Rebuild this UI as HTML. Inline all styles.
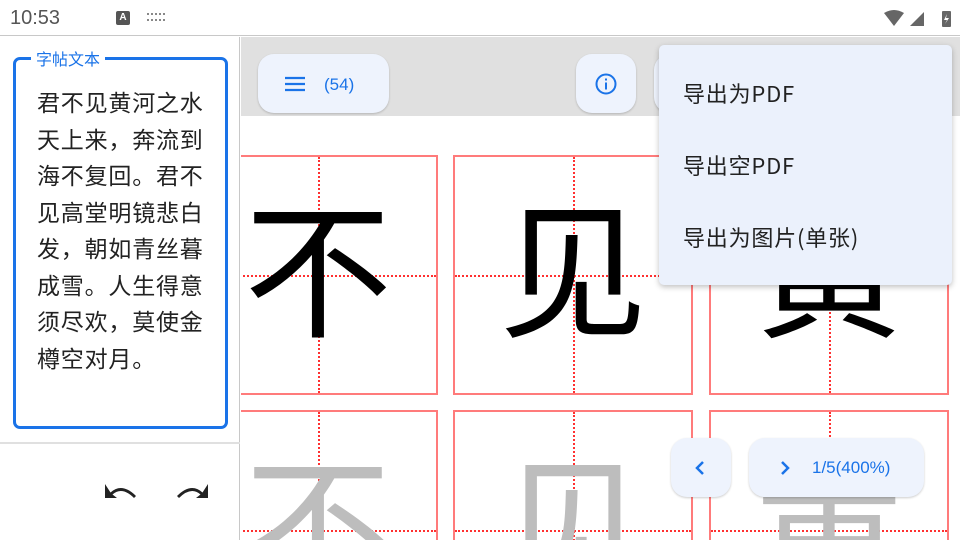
<!DOCTYPE html>
<html><head><meta charset="utf-8"><style>
*{margin:0;padding:0;box-sizing:border-box}
body{width:960px;height:540px;overflow:hidden;position:relative;background:#fff;font-family:"Liberation Sans","Noto Sans CJK SC",sans-serif}
.abs{position:absolute}
.cell{position:absolute;width:240px;height:240px;border:2px solid #ff7b7b}
.cell .v{position:absolute;left:118px;top:0;height:100%;border-left:2px dotted #ff3030}
.cell .h{position:absolute;top:118px;left:0;width:100%;border-top:2px dotted #ff3030}
.cell .c{position:absolute;left:0;top:-13px;width:100%;height:100%;display:flex;align-items:center;justify-content:center;font-family:"Noto Sans CJK SC",sans-serif;font-size:148px;line-height:1;color:#000}
.g .c{color:#bdbdbd}
.btn{position:absolute;background:#eef3fd;border-radius:16px;box-shadow:0 1px 2px rgba(0,0,0,.2)}
.mi{position:absolute;left:683px;font-size:22px;letter-spacing:0.8px;color:#222;line-height:28px;font-family:'Noto Sans CJK SC',sans-serif}
</style></head><body>
<div class="abs" style="left:241px;top:116px;width:719px;height:424px;overflow:hidden">
<div style="position:absolute;left:-43px;top:39px">
 <div class="cell" style="left:0;top:0"><div class="v"></div><div class="h"></div><div class="c">不</div></div>
 <div class="cell" style="left:255px;top:0"><div class="v"></div><div class="h"></div><div class="c">见</div></div>
 <div class="cell" style="left:511px;top:0"><div class="v"></div><div class="h"></div><div class="c">黄</div></div>
 <div class="cell g" style="left:0;top:255px"><div class="v"></div><div class="h"></div><div class="c">不</div></div>
 <div class="cell g" style="left:255px;top:255px"><div class="v"></div><div class="h"></div><div class="c">见</div></div>
 <div class="cell g" style="left:511px;top:255px"><div class="v"></div><div class="h"></div><div class="c">黄</div></div>
</div></div>
<div class="abs" style="left:0;top:0;width:960px;height:36px;background:#fff;border-bottom:1px solid #c8c8c8"></div>
<div class="abs" style="left:10px;top:7px;font-size:20px;color:#555">10:53</div>
<div class="abs" style="left:116px;top:11px;width:14px;height:14px;background:#555;border-radius:2px;color:#fff;font-size:10px;font-weight:bold;text-align:center;line-height:14px">A</div>
<div class="abs" style="left:147px;top:13px;width:18px;height:8px;border-top:2px dotted #888;border-bottom:2px dotted #888"></div>
<svg class="abs" style="left:882px;top:9px" width="72" height="20"><path d="M2 4 Q12 -2 22 4 L12 17 Z" fill="#666"/><path d="M28 17 L42 3 L42 17 Z" fill="#666"/><rect x="60" y="2" width="9" height="16" rx="1" fill="#666"/><path d="M65 5 L62 11 L65 11 L63 15 L67 9 L64 9 Z" fill="#fff"/></svg>
<div class="abs" style="left:241px;top:37px;width:719px;height:79px;background:#e0e0e0"></div>
<div class="btn" style="left:258px;top:54px;width:131px;height:59px"></div>
<svg class="abs" style="left:285px;top:76px" width="20" height="16"><path d="M0 2H20M0 8H20M0 14H20" stroke="#1a73e8" stroke-width="2.2"/></svg>
<div class="abs" style="left:324px;top:75px;font-size:17px;color:#1a73e8">(54)</div>
<div class="btn" style="left:576px;top:54px;width:60px;height:59px"></div>
<svg class="abs" style="left:594px;top:72px" width="24" height="24"><circle cx="12" cy="12" r="9.5" fill="none" stroke="#1a73e8" stroke-width="2"/><rect x="11" y="10.5" width="2" height="7" fill="#1a73e8"/><rect x="11" y="6.5" width="2" height="2" fill="#1a73e8"/></svg>
<div class="btn" style="left:654px;top:54px;width:60px;height:59px"></div>
<div class="abs" style="left:0;top:37px;width:240px;height:503px;background:#fff;border-right:1px solid #c8c8c8"></div>
<div class="abs" style="left:13px;top:57px;width:215px;height:372px;border:3px solid #1a73e8;border-radius:7px"></div>
<div class="abs" style="left:31px;top:48px;background:#fff;padding:0 5px;font-size:16px;color:#1a73e8;font-family:'Noto Sans CJK SC',sans-serif;line-height:20px">字帖文本</div>
<div class="abs" style="left:37px;top:83px;width:172px;font-size:23px;letter-spacing:0.8px;line-height:36.5px;color:#222;font-family:'Noto Sans CJK SC',sans-serif;word-break:break-all">君不见黄河之水天上来，奔流到海不复回。君不见高堂明镜悲白发，朝如青丝暮成雪。人生得意须尽欢，莫使金樽空对月。</div>
<div class="abs" style="left:0;top:442px;width:240px;height:2px;background:#e0e0e0"></div>
<svg class="abs" style="left:104px;top:484px" width="34" height="16"><path d="M1 0V14H13L8.5 10.5Q18 2 30 14L32 12Q18 -2 6.5 8.5Z" fill="#222"/></svg>
<svg class="abs" style="left:175px;top:484px" width="34" height="16"><path d="M33 0V14H21L25.5 10.5Q16 2 4 14L2 12Q16 -2 27.5 8.5Z" fill="#222"/></svg>
<div class="btn" style="left:671px;top:438px;width:60px;height:59px"></div>
<svg class="abs" style="left:694px;top:460px" width="12" height="16"><path d="M9 2L3 8L9 14" stroke="#1a73e8" stroke-width="2.5" fill="none"/></svg>
<div class="btn" style="left:749px;top:438px;width:175px;height:59px"></div>
<svg class="abs" style="left:779px;top:460px" width="12" height="16"><path d="M3 2L9 8L3 14" stroke="#1a73e8" stroke-width="2.5" fill="none"/></svg>
<div class="abs" style="left:812px;top:458px;font-size:17px;color:#1a73e8">1/5(400%)</div>
<div class="abs" style="left:659px;top:45px;width:293px;height:240px;background:#ebf1fc;border-radius:5px;box-shadow:0 2px 6px rgba(0,0,0,.25)"></div>
<div class="mi" style="top:79px">导出为PDF</div>
<div class="mi" style="top:151px">导出空PDF</div>
<div class="mi" style="top:223px">导出为图片(单张)</div>
</body></html>
